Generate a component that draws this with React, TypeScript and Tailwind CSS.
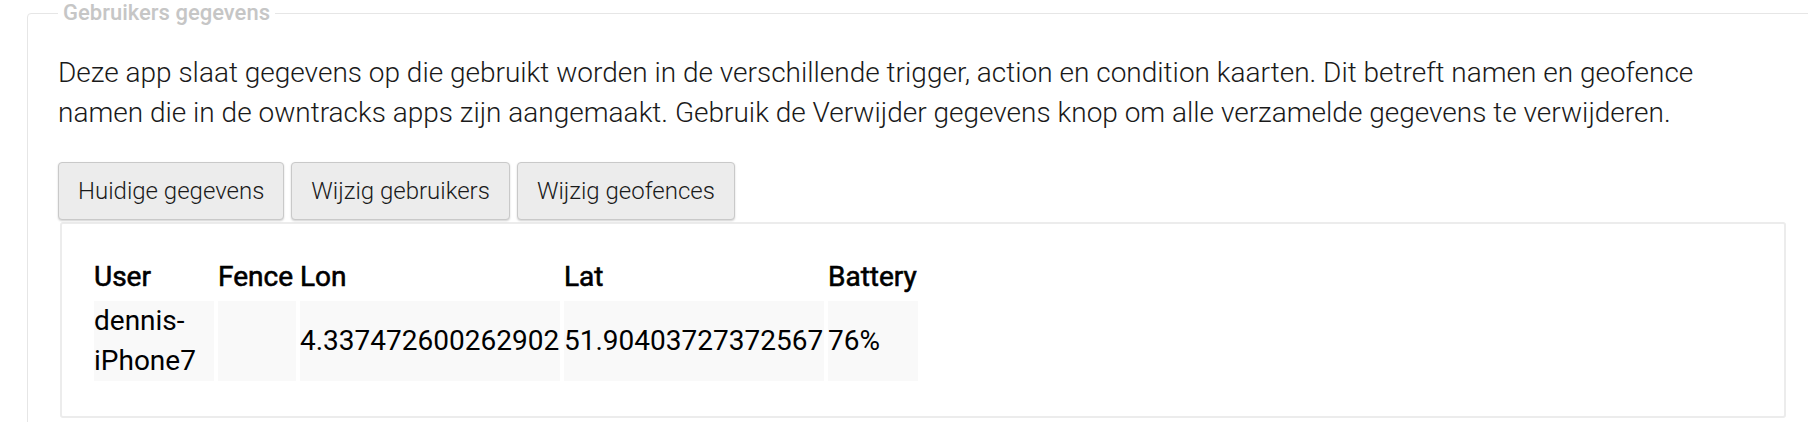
import React from "react";

const COLS = [
  { key: "user", label: "User", w: "w-[120px]" },
  { key: "fence", label: "Fence", w: "w-[78px]" },
  { key: "lon", label: "Lon", w: "w-[260px]" },
  { key: "lat", label: "Lat", w: "w-[260px]" },
  { key: "battery", label: "Battery", w: "w-[90px]" },
];

const ROWS = [
  { user: "dennis-iPhone7", fence: "", lon: "4.337472600262902", lat: "51.90403727372567", battery: "76%" },
];

const TABS = ["Huidige gegevens", "Wijzig gebruikers", "Wijzig geofences"];

export default function App() {
  return (
    <div className="h-[422px] w-[1808px] overflow-hidden bg-white font-['Roboto',sans-serif] text-[#1a1a1a]">
      <fieldset className="ml-[27px] w-[1790px] rounded-[4px] border border-[#e6e6e6] pl-[30px] pr-[30px] pb-6">
        <legend className="px-[5px] font-['Roboto_Medium','Roboto',sans-serif] text-[22px] leading-[26px] font-medium text-[#c6c6c6]">
          Gebruikers gegevens
        </legend>

        {/* Intro text */}
        <p className="mt-[27px] pr-[60px] font-['Roboto_Light','Roboto',sans-serif] text-[28px] leading-[40px] font-light">
          Deze app slaat gegevens op die gebruikt worden in de verschillende trigger, action en condition kaarten. Dit
          betreft namen en geofence namen die in de owntracks apps zijn aangemaakt. Gebruik de Verwijder gegevens knop
          om alle verzamelde gegevens te verwijderen.
        </p>

        {/* Tabs */}
        <div className="mt-[29px] flex gap-[7px]">
          {TABS.map((t) => (
            <button
              key={t}
              className="h-[58px] rounded-[4px] border border-[#c9c9c9] bg-[#ececec] px-[19px] font-['Roboto_Light','Roboto',sans-serif] text-[24px] font-light text-[#1a1a1a] shadow-[0_1px_2px_rgba(0,0,0,0.18)]"
            >
              {t}
            </button>
          ))}
        </div>

        {/* Data panel */}
        <div className="ml-[2px] mt-[2px] rounded-[3px] border-2 border-[#ececec] px-[28px] pt-[29px] pb-[31px]">
          <table className="border-separate border-spacing-[4px] text-[28px] leading-[40px] text-black">
            <thead>
              <tr>
                {COLS.map((c) => (
                  <th
                    key={c.key}
                    className={`${c.w} p-0 text-left font-normal [-webkit-text-stroke:0.6px_black]`}
                  >
                    {c.label}
                  </th>
                ))}
              </tr>
            </thead>
            <tbody>
              {ROWS.map((r, i) => (
                <tr key={i}>
                  {COLS.map((c) => (
                    <td key={c.key} className={`${c.w} bg-[#f9f9f9] p-0 align-middle`}>
                      {r[c.key as keyof typeof r]}
                    </td>
                  ))}
                </tr>
              ))}
            </tbody>
          </table>
        </div>
      </fieldset>
    </div>
  );
}
